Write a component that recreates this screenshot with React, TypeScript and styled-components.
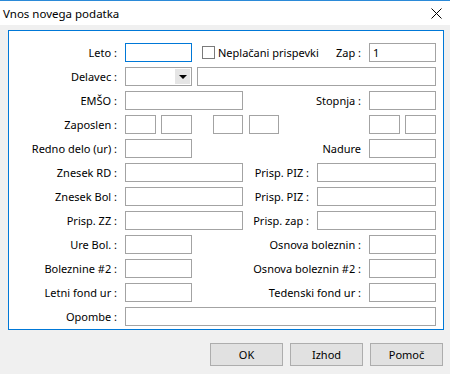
import { FC } from "react";
import styled, { createGlobalStyle } from "styled-components";

const GlobalStyle = createGlobalStyle`
  html, body {
    margin: 0;
    padding: 0;
    background: #f0f0f0;
  }
  body {
    font-family: "Noto Sans", "DejaVu Sans", sans-serif;
    font-size: 11px;
    color: #000;
  }
`;

const Window = styled.div`
  width: 450px;
  height: 374px;
  display: flex;
  flex-direction: column;
  background: #f0f0f0;
  overflow: hidden;
`;

const TitleBar = styled.div`
  height: 25px;
  box-sizing: border-box;
  border-top: 1px solid #2b8ad8;
  background: #fff;
  display: flex;
  align-items: center;
  justify-content: space-between;
  padding: 0 8px 0 3px;
  font-size: 11.5px;
`;

const CloseIcon: FC = () => (
  <svg width="11" height="11" viewBox="0 0 11 11">
    <path d="M0.5 0.5 L10.5 10.5 M10.5 0.5 L0.5 10.5" stroke="#000" strokeWidth="1" />
  </svg>
);

const Body = styled.div`
  padding: 5px 6px 0 8px;
`;

const Panel = styled.div`
  border: 1px solid #0078d7;
  background: #fff;
  padding: 12px 7px 3px 0;
  display: flex;
  flex-direction: column;
  gap: 5px;
`;

const Row = styled.div`
  display: flex;
  align-items: center;
  height: 19px;
`;

const Label = styled.div`
  width: 108px;
  margin-right: 8px;
  text-align: right;
  white-space: nowrap;
`;

const RightLabel = styled.div`
  flex: 1;
  margin-right: 8px;
  text-align: right;
  white-space: nowrap;
`;

const Field = styled.input<{ $w?: number; $gap?: number; $focus?: boolean }>`
  box-sizing: border-box;
  height: 19px;
  width: ${(p) => (p.$w ? `${p.$w}px` : "auto")};
  ${(p) => (p.$w ? "" : "flex: 1; min-width: 0;")}
  margin: 0 0 0 ${(p) => p.$gap ?? 0}px;
  padding: 0 3px;
  border: 1px solid ${(p) => (p.$focus ? "#0078d7" : "#a3a3a3")};
  background: #fff;
  font: inherit;
  color: #000;
  outline: none;
`;

const Select = styled.div`
  box-sizing: border-box;
  width: 67px;
  height: 19px;
  border: 1px solid #a3a3a3;
  display: flex;
  justify-content: flex-end;
  padding: 1px;
`;

const DropButton = styled.div`
  width: 15px;
  background: #e5e5e5;
  display: flex;
  align-items: center;
  justify-content: center;
`;

const Arrow = styled.div`
  width: 0;
  height: 0;
  border-left: 4px solid transparent;
  border-right: 4px solid transparent;
  border-top: 4px solid #000;
`;

const CheckWrap = styled.label`
  display: flex;
  align-items: center;
  margin-left: 10px;
  white-space: nowrap;
`;

const CheckBox = styled.span`
  box-sizing: border-box;
  width: 13px;
  height: 13px;
  border: 1px solid #7a7a7a;
  background: #fff;
  margin-right: 3px;
`;

const Spacer = styled.div`
  flex: 1;
`;

const ButtonBar = styled.div`
  display: flex;
  justify-content: flex-end;
  gap: 7px;
  padding: 13px 7px 0 0;
`;

const Button = styled.button`
  box-sizing: border-box;
  width: 73px;
  height: 23px;
  border: 1px solid #adadad;
  background: #e1e1e1;
  font: inherit;
  color: #000;
  padding: 0;
`;

const App: FC = () => {
  return (
    <Window>
      <GlobalStyle />
      <TitleBar>
        <span>Vnos novega podatka</span>
        <CloseIcon />
      </TitleBar>
      <Body>
        <Panel>
          <Row>
            <Label>Leto :</Label>
            <Field $w={67} $focus />
            <CheckWrap>
              <CheckBox />
              Neplačani prispevki
            </CheckWrap>
            <RightLabel>Zap :</RightLabel>
            <Field $w={67} defaultValue="1" />
          </Row>
          <Row>
            <Label>Delavec :</Label>
            <Select>
              <DropButton>
                <Arrow />
              </DropButton>
            </Select>
            <Field $gap={5} />
          </Row>
          <Row>
            <Label>EMŠO :</Label>
            <Field $w={118} />
            <RightLabel>Stopnja :</RightLabel>
            <Field $w={67} />
          </Row>
          <Row>
            <Label>Zaposlen :</Label>
            <Field $w={31} />
            <Field $w={31} $gap={5} />
            <Field $w={30} $gap={21} />
            <Field $w={30} $gap={6} />
            <Spacer />
            <Field $w={31} />
            <Field $w={31} $gap={5} />
          </Row>
          <Row>
            <Label>Redno delo (ur) :</Label>
            <Field $w={67} />
            <RightLabel>Nadure</RightLabel>
            <Field $w={67} />
          </Row>
          <Row>
            <Label>Znesek RD :</Label>
            <Field $w={118} />
            <RightLabel>Prisp. PIZ :</RightLabel>
            <Field $w={119} />
          </Row>
          <Row>
            <Label>Znesek Bol :</Label>
            <Field $w={118} />
            <RightLabel>Prisp. PIZ :</RightLabel>
            <Field $w={119} />
          </Row>
          <Row>
            <Label>Prisp. ZZ :</Label>
            <Field $w={118} />
            <RightLabel>Prisp. zap :</RightLabel>
            <Field $w={119} />
          </Row>
          <Row>
            <Label>Ure Bol. :</Label>
            <Field $w={67} />
            <RightLabel>Osnova boleznin :</RightLabel>
            <Field $w={67} />
          </Row>
          <Row>
            <Label>Boleznine #2 :</Label>
            <Field $w={67} />
            <RightLabel>Osnova boleznin #2 :</RightLabel>
            <Field $w={67} />
          </Row>
          <Row>
            <Label>Letni fond ur :</Label>
            <Field $w={67} />
            <RightLabel>Tedenski fond ur :</RightLabel>
            <Field $w={67} />
          </Row>
          <Row>
            <Label>Opombe :</Label>
            <Field />
          </Row>
        </Panel>
      </Body>
      <ButtonBar>
        <Button>OK</Button>
        <Button>Izhod</Button>
        <Button>Pomoč</Button>
      </ButtonBar>
    </Window>
  );
};

export default App;
